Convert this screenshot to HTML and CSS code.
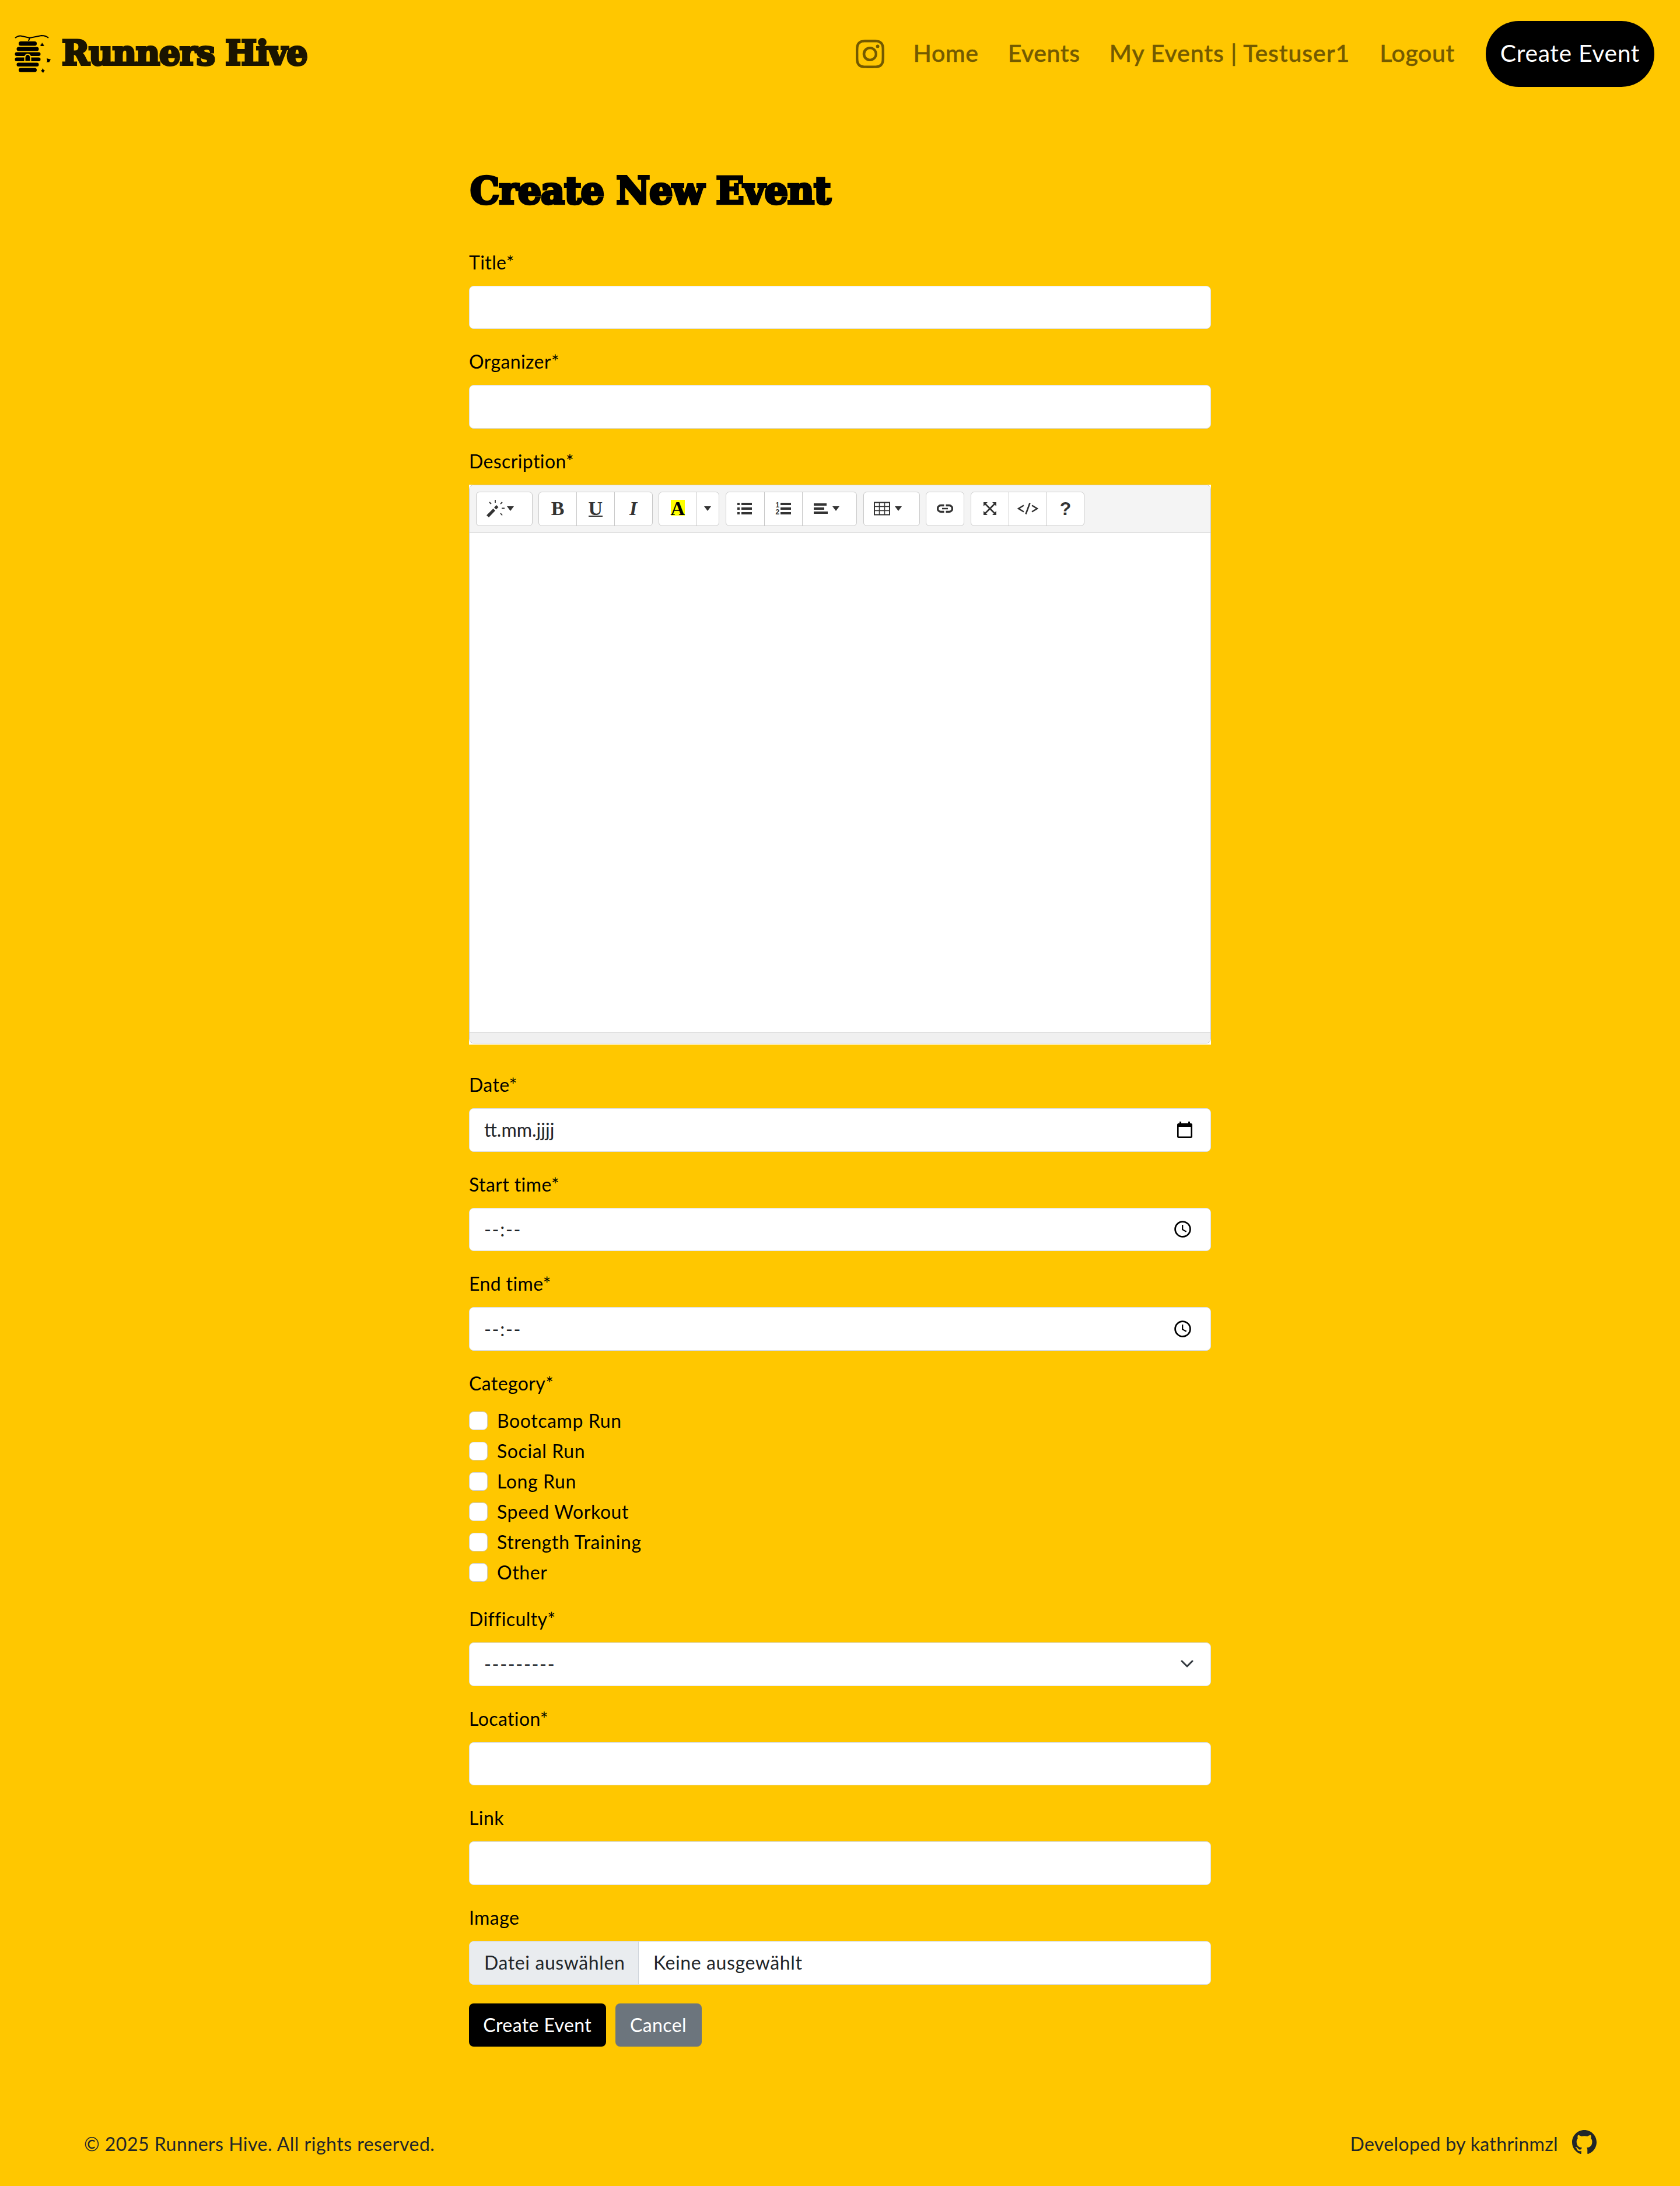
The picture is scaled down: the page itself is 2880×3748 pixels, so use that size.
FILE: index.html
```html
<!DOCTYPE html>
<html lang="en">
<head>
<meta charset="utf-8">
<title>Runners Hive</title>
<link rel="stylesheet" href="styles.css">
</head>
<body>
<header class="navbar">
  <a class="brand">
    <svg class="hive" viewBox="0 0 62 66" width="62" height="66">
      <path d="M1 5 Q7 0 13 2 L26 5 L46 1 Q54 1 58 5 M26 5 L24 10" fill="none" stroke="#000" stroke-width="2"/>
      <g>
        <rect x="7" y="11" width="31" height="7.500" rx="3.500"/><rect x="3.500" y="20.500" width="38" height="7" rx="3.500"/>
        <rect x="0.500" y="29.500" width="44" height="6.500" rx="3.250"/><rect x="0.500" y="38.500" width="44" height="6.500" rx="3.250"/>
        <rect x="3.500" y="47.500" width="38" height="6.500" rx="3.250"/><rect x="7" y="56.500" width="31" height="7" rx="3.500"/>
      </g>
      <path d="M17.500 45.500V39a5 6 0 0 1 10 0v6.500z" stroke="#ffc700" stroke-width="2"/>
      <path d="M44 17l2-1 1-3 2 3 2 2-2 1h-4zM55 40l7 2-3 5-2-1-2 2 1-4zM45 61l2-1 1-3 2 3 2 1-2 2-1 2-2-2z"/>
    </svg>
    <span class="brand-name">Runners Hive</span>
  </a>
  <nav class="nav">
    <a><svg class="insta" width="49" height="49" viewBox="0 0 16 16" fill="currentColor"><path d="M8 0C5.829 0 5.556.01 4.703.048 3.850.088 3.269.222 2.760.420a3.900 3.900 0 0 0-1.417.923A3.900 3.900 0 0 0 .420 2.760C.222 3.268.087 3.850.048 4.700.010 5.555 0 5.827 0 8.001c0 2.172.010 2.444.048 3.297.040.852.174 1.433.372 1.942.205.526.478.972.923 1.417.444.445.890.719 1.416.923.510.198 1.090.333 1.942.372C5.555 15.990 5.827 16 8 16s2.444-.010 3.298-.048c.851-.040 1.434-.174 1.943-.372a3.900 3.900 0 0 0 1.416-.923c.445-.445.718-.891.923-1.417.197-.509.332-1.090.372-1.942C15.990 10.445 16 10.173 16 8s-.010-2.445-.048-3.299c-.040-.851-.175-1.433-.372-1.941a3.900 3.900 0 0 0-.923-1.417A3.900 3.900 0 0 0 13.240.420c-.510-.198-1.092-.333-1.943-.372C10.443.010 10.172 0 7.998 0zm-.717 1.442h.718c2.136 0 2.389.007 3.232.046.780.035 1.204.166 1.486.275.373.145.640.319.920.599s.453.546.598.920c.110.281.240.705.275 1.485.039.843.047 1.096.047 3.231s-.008 2.389-.047 3.232c-.035.780-.166 1.203-.275 1.485a2.500 2.500 0 0 1-.599.919c-.280.280-.546.453-.920.598-.280.110-.704.240-1.485.276-.843.038-1.096.047-3.232.047s-2.390-.009-3.233-.047c-.780-.036-1.203-.166-1.485-.276a2.500 2.500 0 0 1-.920-.598 2.500 2.500 0 0 1-.600-.920c-.109-.281-.240-.705-.275-1.485-.038-.843-.046-1.096-.046-3.233s.008-2.388.046-3.231c.036-.780.166-1.204.276-1.486.145-.373.319-.640.599-.920s.546-.453.920-.598c.282-.110.705-.240 1.485-.276.738-.034 1.024-.044 2.515-.045zm4.988 1.328a.960.960 0 1 0 0 1.920.960.960 0 0 0 0-1.920m-4.270 1.122a4.109 4.109 0 1 0 0 8.217 4.109 4.109 0 0 0 0-8.217m0 1.441a2.667 2.667 0 1 1 0 5.334 2.667 2.667 0 0 1 0-5.334"/></svg></a>
    <a class="n-link n-home">Home</a>
    <a class="n-link n-events">Events</a>
    <a class="n-link n-my">My Events | Testuser1</a>
    <a class="n-link n-logout">Logout</a>
    <a class="pill">Create Event</a>
  </nav>
</header>

<main class="main">
  <h1>Create New Event</h1>
  <form>
    <div class="field"><label>Title*</label><div class="control"></div></div>
    <div class="field"><label>Organizer*</label><div class="control"></div></div>
    <div class="field field-editor"><label>Description*</label>
      <div class="frame"><div class="editor">
        <div class="toolbar">
          <div class="group g-1">
            <span class="btn"><svg width="32" height="32" viewBox="0 0 32 32" fill="#333"><path d="M0 27.500L11.500 16l3.500 3.500L4 31zM13 14l4-4 3.500 3.500-4 4z"/><path d="M15 1v5M5 5l3 3M27 5l-3 3M26 15.500h5M24 24l3 3.500" stroke="#333" stroke-width="1.800"/></svg><i class="caret"></i></span>
          </div>
          <div class="group g-3">
            <span class="btn serif">B</span><span class="btn serif"><span class="under">U</span></span><span class="btn serif italic">I</span>
          </div>
          <div class="group g-color">
            <span class="btn serif"><span class="mark">A</span></span><span class="btn"><i class="caret"></i></span>
          </div>
          <div class="group g-list">
            <span class="btn"><svg width="26" height="22" viewBox="0 0 26 22" fill="#333"><path d="M0 1h4v4H0zM0 9h4v4H0zM0 17h4v4H0zM7 1h18v4H7zM7 9h18v4H7zM7 17h18v4H7z"/></svg></span>
            <span class="btn"><span class="digits"><span>1</span><span>2</span></span><svg width="18" height="22" viewBox="0 0 18 22" fill="#333"><path d="M0 1h18v4H0zM0 9h18v4H0zM0 17h18v4H0z"/></svg></span>
            <span class="btn"><svg width="24" height="18" viewBox="0 0 24 18" fill="#333"><path d="M0 0h22v4H0zM0 7h18v4H0zM0 14h24v4H0z"/></svg><i class="caret wide"></i></span>
          </div>
          <div class="group g-1">
            <span class="btn"><svg width="28" height="24" viewBox="0 0 28 24" fill="none" stroke="#333"><path d="M1 1.500h26v21H1z" stroke-width="2"/><path d="M9.500 1v22M18.500 1v22M1 8.500h26M1 15.500h26" stroke-width="1.500"/></svg><i class="caret wide"></i></span>
          </div>
          <div class="group g-link">
            <span class="btn"><svg width="28" height="16" viewBox="0 0 28 16" fill="none" stroke="#333" stroke-width="3.400"><path d="M12.500 2.500H7a5.500 5.500 0 0 0 0 11h5.500M15.500 2.500H21a5.500 5.500 0 0 1 0 11h-5.500"/><path d="M9 8h10" stroke-width="2.600"/></svg></span>
          </div>
          <div class="group g-3">
            <span class="btn"><svg width="22" height="22" viewBox="0 0 22 22" fill="#333"><path d="M0 0h7L0 7zM22 0v7l-7-7zM0 22v-7l7 7zM22 22h-7l7-7z"/><path d="M2 2l18 18M20 2L2 20" stroke="#333" stroke-width="2.600"/></svg></span>
            <span class="btn"><svg width="36" height="20" viewBox="0 0 36 20" fill="none" stroke="#333" stroke-width="2.600"><path d="M11 4.500L2 10l9 5.500M25 4.500L34 10l-9 5.500M21.500 0.500L14.500 19.500"/></svg></span>
            <span class="btn help">?</span>
          </div>
        </div>
        <div class="canvas"></div>
        <div class="statusbar"></div>
      </div></div>
    </div>
    <div class="field"><label>Date*</label><div class="control"><span class="t-date">tt.mm.jjjj</span>
      <svg class="cal" width="26" height="29" viewBox="0 0 26 29"><path d="M4 0h3v3h12V0h3v3h1.500A2.500 2.500 0 0 1 26 5.500v20a2.500 2.500 0 0 1-2.500 2.500h-21A2.500 2.500 0 0 1 0 25.500v-20A2.500 2.500 0 0 1 2.500 3H4zM2.600 9v16.500h20.800V9z" fill-rule="evenodd"/></svg></div></div>
    <div class="field"><label>Start time*</label><div class="control"><span class="t-dash">--:--</span>
      <svg class="clock" width="29" height="29" viewBox="0 0 29 29" fill="none" stroke="#000"><circle cx="14.500" cy="14.500" r="12.900" stroke-width="2.800"/><path d="M14.200 7v8.200l6.500 3.600" stroke-width="2.200"/></svg></div></div>
    <div class="field"><label>End time*</label><div class="control"><span class="t-dash">--:--</span>
      <svg class="clock" width="29" height="29" viewBox="0 0 29 29" fill="none" stroke="#000"><circle cx="14.500" cy="14.500" r="12.900" stroke-width="2.800"/><path d="M14.200 7v8.200l6.500 3.600" stroke-width="2.200"/></svg></div></div>
    <div class="field"><label>Category*</label>
      <div class="checks">
        <label class="check"><i class="box"></i>Bootcamp Run</label>
        <label class="check"><i class="box"></i>Social Run</label>
        <label class="check"><i class="box"></i>Long Run</label>
        <label class="check"><i class="box"></i>Speed Workout</label>
        <label class="check"><i class="box"></i>Strength Training</label>
        <label class="check"><i class="box"></i>Other</label>
      </div>
    </div>
    <div class="field"><label>Difficulty*</label><div class="control"><span class="t-dash">---------</span>
      <svg class="chev" width="22" height="14" viewBox="0 0 22 14"><path d="M2 2l9 9 9-9" fill="none" stroke="#343a40" stroke-width="3" stroke-linecap="round" stroke-linejoin="round"/></svg></div></div>
    <div class="field"><label>Location*</label><div class="control"></div></div>
    <div class="field"><label>Link</label><div class="control"></div></div>
    <div class="field"><label>Image</label><div class="control file"><span class="choose">Datei auswählen</span><span class="t-file">Keine ausgewählt</span></div></div>
    <div class="actions"><a class="action create">Create Event</a><a class="action cancel">Cancel</a></div>
  </form>
</main>

<footer class="footer">
  <span class="f-left">© 2025 Runners Hive. All rights reserved.</span>
  <span class="dev"><span class="f-right">Developed by kathrinmzl</span>
  <svg width="42" height="42" viewBox="0 0 16 16" fill="#212529"><path d="M8 0C3.580 0 0 3.580 0 8c0 3.540 2.290 6.530 5.470 7.590.400.070.550-.170.550-.380 0-.190-.010-.820-.010-1.490-2.010.370-2.530-.490-2.690-.940-.090-.230-.480-.940-.820-1.130-.280-.150-.680-.520-.010-.530.630-.010 1.080.580 1.230.820.720 1.210 1.870.870 2.330.660.070-.520.280-.870.510-1.070-1.780-.200-3.640-.890-3.640-3.950 0-.870.310-1.590.820-2.150-.080-.200-.360-1.020.080-2.120 0 0 .670-.210 2.200.820.640-.180 1.320-.270 2-.270s1.360.090 2 .270c1.530-1.040 2.200-.820 2.200-.820.440 1.100.160 1.920.080 2.120.510.560.820 1.270.820 2.150 0 3.070-1.870 3.750-3.650 3.950.290.250.540.730.540 1.480 0 1.070-.010 1.930-.010 2.200 0 .210.150.460.550.380A8.010 8.010 0 0 0 16 8c0-4.420-3.580-8-8-8"/></svg></span>
</footer>
</body>
</html>
```

FILE: styles.css
```css
* { box-sizing: border-box; }
body {
  margin: 0;
  min-height: 3748px;
  display: flex;
  flex-direction: column;
  background: #ffc700;
  color: #000;
  font: 32px/48px Lato, sans-serif;
  letter-spacing: 0.4px;
}
svg { display: block; flex: none; }

.navbar { display: flex; justify-content: space-between; align-items: center; height: 185px; padding: 0 44px 0 25px; }
.brand { display: flex; align-items: center; gap: 19px; }
.brand-name {
  padding-bottom: 3px;
  font: bold 57px/64px "DejaVu Serif", serif;
  letter-spacing: -1.200px;
  color: #1a1400;
  -webkit-text-stroke: 4px #1a1400;
}
.nav { display: flex; align-items: center; font-size: 41px; font-weight: 500; color: #735a00; letter-spacing: 0.600px; white-space: nowrap; }
.n-link { padding-bottom: 3px; -webkit-text-stroke: 0.500px #735a00; }
.insta { margin-right: 50px; }
.n-home { margin-right: 50px; }
.n-events { margin-right: 50px; }
.n-my { margin-right: 51px; letter-spacing: 0.900px; }
.n-logout { margin-right: 53px; }
.pill { width: 289px; height: 113px; border-radius: 57px; background: #000; color: #fff; font-weight: 400; line-height: 110px; text-align: center; }

.main { width: 1272px; margin: 0 auto; flex: 1; }
h1 {
  margin: 104px 0 0;
  padding-left: 2px;
  height: 136.670px;
  font: bold 63px/76px "DejaVu Serif", serif;
  letter-spacing: -0.700px;
  white-space: nowrap;
  -webkit-text-stroke: 4.500px #000;
}
.field { margin-bottom: 32px; }
.field > label { display: block; margin-bottom: 16px; }
.control {
  display: flex;
  align-items: center;
  justify-content: space-between;
  height: 74.670px;
  padding: 0 25px;
  border: 1.300px solid #d8dbdc;
  border-radius: 8px;
  background: #fff;
  color: #212529;
}
.t-date { letter-spacing: 0; }
.t-dash { letter-spacing: 1.700px; }
.cal { margin-right: 6px; }
.clock { margin-right: 8px; }
.chev { margin-right: 4px; }
.file { justify-content: flex-start; padding: 0; overflow: hidden; letter-spacing: 0.600px; }
.choose { width: 290px; height: 100%; padding-left: 25px; line-height: 72px; background: #e9ecef; border-right: 1px solid #ced4da; }
.t-file { margin-left: 25px; }

.field-editor { margin-bottom: 45px; }
.frame { height: 960px; background: #fff; }
.editor { display: flex; flex-direction: column; height: 958px; border: 1px solid #c8c8c8; border-radius: 8px; overflow: hidden; }
.toolbar { display: flex; gap: 10.670px; height: 82px; padding: 11px 11px; background: #f4f4f4; border-bottom: 1px solid #d0d0d0; }
.group { display: flex; flex: none; height: 59px; border: 1.300px solid #c8c8c8; border-radius: 6px; background: #fff; }
.g-1 { width: 96.500px; }
.g-3 { width: 195.500px; }
.g-color { width: 104px; }
.g-list { width: 225.500px; }
.g-link { width: 66px; }
.btn { display: flex; flex: 1; align-items: center; justify-content: center; letter-spacing: 0; color: #333; }
.btn + .btn { border-left: 1px solid #c8c8c8; }
.g-1 .btn { justify-content: flex-start; padding-left: 17px; }
.g-color .btn:last-child { flex: 0 0 39px; }
.g-list .btn { flex: 0 0 65px; }
.g-list .btn:last-child { flex: 1; justify-content: flex-start; padding-left: 19px; }
.caret { margin-left: 3px; border: 6px solid transparent; border-top: 8px solid #333; border-bottom: 0; }
.caret.wide { margin-left: 8px; }
.g-color .caret { margin-left: 0; }
.serif { font: bold 34px/48px "Liberation Serif", serif; }
.under { height: 27px; line-height: 26px; border-bottom: 2px solid #333; }
.italic { font-style: italic; }
.mark { height: 27px; line-height: 30px; background: #ff0; color: #000; margin-top: -3px; }
.digits { display: flex; flex-direction: column; width: 9px; font: bold 12px/12px "Liberation Sans", sans-serif; }
.help { font: bold 32px/48px "Liberation Sans", sans-serif; }
.canvas { flex: 1; }
.statusbar { height: 18px; background: #f0f0f0; border-top: 1px solid #d8d8d8; }

.checks { display: flex; flex-direction: column; gap: 4px; letter-spacing: 0.600px; }
.check { display: flex; align-items: center; gap: 16px; }
.box { width: 32px; height: 32px; border: 1px solid #ccc; border-radius: 8px; background: #fff; }

.actions { display: flex; gap: 16px; }
.action { height: 74.670px; border-radius: 8px; line-height: 74px; text-align: center; color: #fff; }
.create { width: 234.500px; background: #000; }
.cancel { width: 148px; background: #6c757d; }

.footer { display: flex; justify-content: space-between; align-items: center; height: 144px; padding: 0 143px 0 144px; color: #212529; }
.f-left { letter-spacing: 0.500px; }
.f-right { letter-spacing: 0.350px; }
.dev { display: flex; align-items: center; gap: 24px; }
.dev svg { margin-top: -6px; }
```
